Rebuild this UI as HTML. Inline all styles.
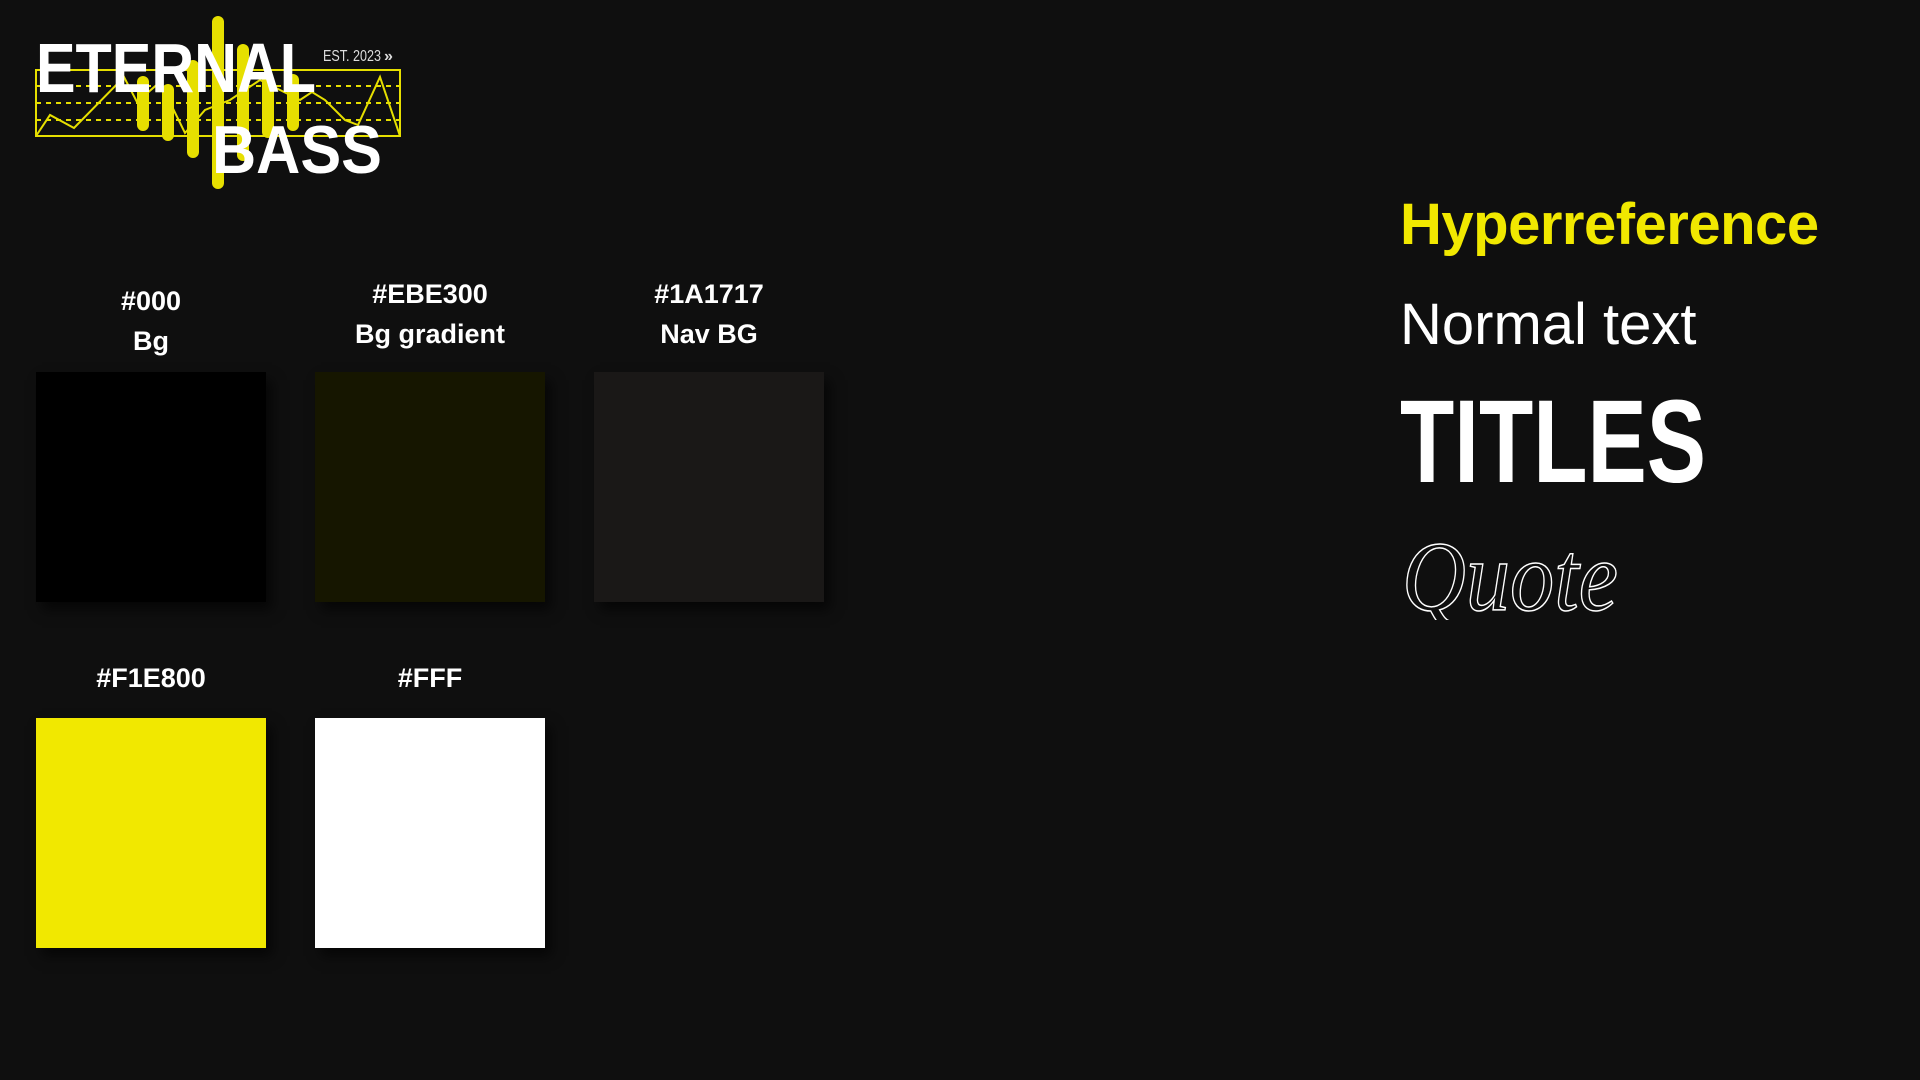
<!DOCTYPE html>
<html><head><meta charset="utf-8"><style>
body{margin:0;width:1920px;height:1080px;background:#0f0f0f;overflow:hidden;position:relative;font-family:"Liberation Sans",sans-serif;}
.sw{position:absolute;width:230px;height:230px;box-shadow:6px 8px 12px rgba(0,0,0,.6);}
.lb{position:absolute;width:230px;text-align:center;color:#fff;font-weight:bold;font-size:27px;line-height:40px;}
.r{position:absolute;left:1400px;}
</style></head><body>
<svg style="position:absolute;left:0;top:0" width="420" height="200" viewBox="0 0 420 200">
<rect x="36" y="70" width="364" height="66" fill="none" stroke="#e6df00" stroke-width="2"/>
<g stroke="#e6df00" stroke-width="2" stroke-dasharray="5 5"><line x1="36" y1="86" x2="400" y2="86"/><line x1="36" y1="103" x2="400" y2="103"/><line x1="36" y1="120" x2="400" y2="120"/></g>
<polyline points="36,136 50,115 74,128 124,77 137,102 160,82 185,133 205,110 230,100 260,80 300,100 312,92 325,100 345,120 358,125 380,77 400,136" fill="none" stroke="#e6df00" stroke-width="2"/>
<g stroke="#e6df00" stroke-linecap="round" stroke-width="12"><line x1="143" y1="82" x2="143" y2="125"/><line x1="168" y1="90" x2="168" y2="135"/><line x1="193" y1="66" x2="193" y2="152"/><line x1="218" y1="22" x2="218" y2="183"/><line x1="243" y1="50" x2="243" y2="155"/><line x1="268" y1="80" x2="268" y2="132"/><line x1="293" y1="80" x2="293" y2="125"/></g>
<text x="36" y="92" font-family="Liberation Sans" font-weight="bold" font-size="70" fill="#fff" textLength="280" lengthAdjust="spacingAndGlyphs">ETERNAL</text>
<text x="212" y="173" font-family="Liberation Sans" font-weight="bold" font-size="68" fill="#fff" textLength="170" lengthAdjust="spacingAndGlyphs">BASS</text>
<text x="323" y="61" font-family="Liberation Sans" font-size="16" fill="#ddd" textLength="58" lengthAdjust="spacingAndGlyphs">EST. 2023</text>
<text x="384" y="61" font-family="Liberation Sans" font-weight="bold" font-size="16" fill="#ddd">»</text>
</svg>
<div class="lb" style="left:36px;top:281px">#000<br>Bg</div>
<div class="lb" style="left:315px;top:274px">#EBE300<br>Bg gradient</div>
<div class="lb" style="left:594px;top:274px">#1A1717<br>Nav BG</div>
<div class="lb" style="left:36px;top:658px">#F1E800</div>
<div class="lb" style="left:315px;top:658px">#FFF</div>
<div class="sw" style="left:36px;top:372px;background:#000"></div>
<div class="sw" style="left:315px;top:372px;background:#161600"></div>
<div class="sw" style="left:594px;top:372px;background:#1a1817"></div>
<div class="sw" style="left:36px;top:718px;background:#f1e800"></div>
<div class="sw" style="left:315px;top:718px;background:#fff"></div>
<div class="r" style="top:190px;color:#f1e800;font-size:58px;font-weight:bold;line-height:70px;letter-spacing:-0.5px">Hyperreference</div>
<div class="r" style="top:290px;color:#fff;font-size:58px;line-height:70px">Normal text</div>
<svg class="r" style="left:1400px;top:395px" width="310" height="90">
<text x="0" y="87" font-family="Liberation Sans" font-weight="bold" font-size="118" fill="#fff" textLength="306" lengthAdjust="spacingAndGlyphs">TITLES</text></svg>
<svg class="r" style="left:1400px;top:510px" width="240" height="110">
<text x="2" y="100" font-family="Liberation Serif" font-style="italic" font-size="100" fill="none" stroke="#fff" stroke-width="1.5" textLength="216" lengthAdjust="spacingAndGlyphs">Quote</text></svg>
</body></html>
